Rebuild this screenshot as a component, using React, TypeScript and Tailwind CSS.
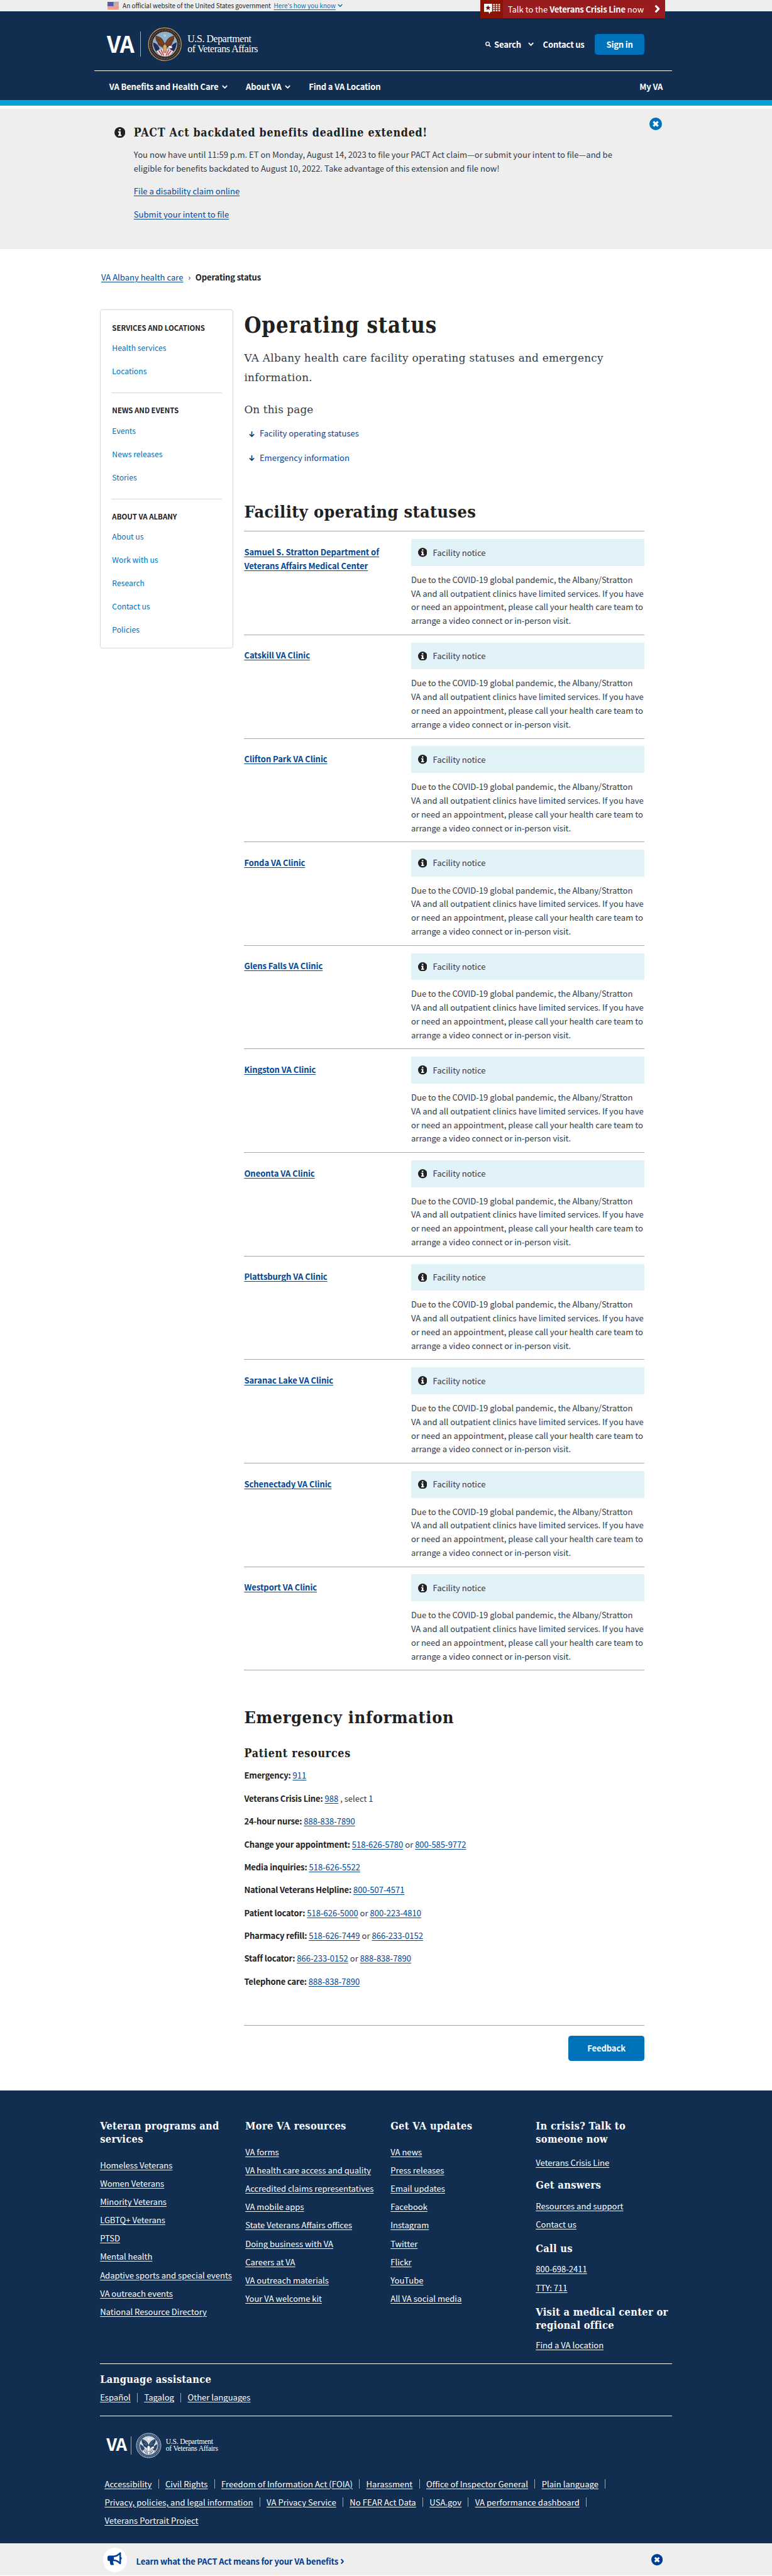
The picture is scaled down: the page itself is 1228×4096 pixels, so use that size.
import React from "react";
import { FaBullhorn } from "react-icons/fa";

const SANS = "font-['Noto_Sans_CJK_SC','Source_Sans_Pro',sans-serif]";
const SLAB = "font-['DejaVu_Serif_Condensed','DejaVu_Serif',serif]";
const SLAB_WIDE = "font-['DejaVu_Serif',serif]";

function Chevron({ className = "", w = 3.2 }: { className?: string; w?: number }) {
  return (
    <svg viewBox="0 0 16 10" className={className} fill="none" stroke="currentColor" strokeWidth={w}>
      <path d="M1.5 1.5 8 8l6.5-6.5" />
    </svg>
  );
}

function Info({ className }: { className: string }) {
  return (
    <svg viewBox="0 0 20 20" className={className}>
      <circle cx="10" cy="10" r="10" fill="#212121" />
      <path d="M8.3 3.4h3.2v2.7H8.3zM6.8 7.8h4.7v6.3h1.6v2.3H6.8v-2.3h1.6V10H6.8z" fill="#fff" />
    </svg>
  );
}

function Close({ className }: { className: string }) {
  return (
    <svg viewBox="0 0 22 22" className={className}>
      <circle cx="11" cy="11" r="11" fill="currentColor" />
      <path d="m7 7 8 8M15 7l-8 8" stroke="#fff" strokeWidth="3.6" />
    </svg>
  );
}

function Flag() {
  return (
    <svg viewBox="0 0 20 14" className="h-[14px] w-[20px]">
      <rect width="20" height="14" fill="#fff" />
      {[0, 2.3, 4.6, 6.9, 9.2, 11.6].map((y) => (
        <rect key={y} y={y} width="20" height="1.3" fill="#e0563d" />
      ))}
      <rect width="10.5" height="7.6" fill="#3d4fc0" />
      {[1.5, 3.8, 6].map((y) =>
        [1.5, 4, 6.5, 9].map((x) => <circle key={`${x}-${y}`} cx={x} cy={y} r=".45" fill="#dfe3ff" />),
      )}
    </svg>
  );
}

function Seal({ className, mono = false }: { className: string; mono?: boolean }) {
  const ring = mono ? "#2a4465" : "#1b1c2b";
  const edge = mono ? "#c9d3df" : "#c9a063";
  const sky = mono ? "#d3dbe5" : "#86b3d6";
  const wing = mono ? "#24405f" : "#6b3a22";
  const dark = mono ? "#2c4767" : "#232b58";
  return (
    <svg viewBox="0 0 60 60" className={className}>
      <circle cx="30" cy="30" r="28.600" fill={ring} stroke={edge} strokeWidth="1.400" />
      <circle cx="30" cy="30" r="25" fill="none" stroke={edge} strokeWidth="3.200" strokeDasharray="1.300 1.500" opacity=".6" />
      <circle cx="30" cy="30" r="21.400" fill={sky} stroke={edge} strokeWidth="1.200" />
      <path d="M9.500 27c4 1 8 4 10 8l3 9-5 2c-5-5-8-12-8-19zM50.500 27c-4 1-8 4-10 8l-3 9 5 2c5-5 8-12 8-19z" fill={dark} />
      <path d="M15 42l8-4h14l8 4c-4 6-9 9-15 9s-11-3-15-9z" fill={mono ? "#eef2f6" : "#ecdfe2"} />
      <path d="M19 41l6 8M23 39l5 11M41 41l-6 8M37 39l-5 11" stroke={mono ? "#3c5473" : "#b23246"} strokeWidth="1.500" />
      <path d="M14 15c6 1 11 4 14 10l2 4 2-4c3-6 8-9 14-10 1 5 0 9-3 12 0 4-3 6-6 7l-3 2-2 9h-4l-2-9-3-2c-3-1-6-3-6-7-3-3-4-7-3-12z" fill={wing} />
      <path d="M17 18c4 2 7 5 9 10M43 18c-4 2-7 5-9 10M19 25l7 5M41 25l-7 5" stroke={mono ? "#93a5ba" : "#94582f"} strokeWidth=".9" fill="none" />
      <path d="M27 33l3-3 3 3v6l-3 8-3-8z" fill={mono ? "#fff" : "#d8a56c"} />
      <path d="M37 33l6 1-1 3-5-1z" fill="#fff" />
      <circle cx="30" cy="15" r="2" fill={mono ? "#fff" : "#d9cf8a"} />
    </svg>
  );
}

function A({ children, className = "text-[#004795]" }: { children: React.ReactNode; className?: string }) {
  return (
    <a href="#" className={`underline decoration-1 underline-offset-[2px] ${className}`}>
      {children}
    </a>
  );
}

const clinics: React.ReactNode[] = [
  <>Samuel S. Stratton Department of<br />Veterans Affairs Medical Center</>,
  "Catskill VA Clinic",
  "Clifton Park VA Clinic",
  "Fonda VA Clinic",
  "Glens Falls VA Clinic",
  "Kingston VA Clinic",
  "Oneonta VA Clinic",
  "Plattsburgh VA Clinic",
  "Saranac Lake VA Clinic",
  "Schenectady VA Clinic",
  "Westport VA Clinic",
];

const sidebar = [
  { title: "SERVICES AND LOCATIONS", links: ["Health services", "Locations"] },
  { title: "NEWS AND EVENTS", links: ["Events", "News releases", "Stories"] },
  { title: "ABOUT VA ALBANY", links: ["About us", "Work with us", "Research", "Contact us", "Policies"] },
];

const phones: { label: string; numbers: string[]; after?: string }[] = [
  { label: "Emergency:", numbers: ["911"] },
  { label: "Veterans Crisis Line:", numbers: ["988"], after: " , select 1" },
  { label: "24-hour nurse:", numbers: ["888-838-7890"] },
  { label: "Change your appointment:", numbers: ["518-626-5780", "800-585-9772"] },
  { label: "Media inquiries:", numbers: ["518-626-5522"] },
  { label: "National Veterans Helpline:", numbers: ["800-507-4571"] },
  { label: "Patient locator:", numbers: ["518-626-5000", "800-223-4810"] },
  { label: "Pharmacy refill:", numbers: ["518-626-7449", "866-233-0152"] },
  { label: "Staff locator:", numbers: ["866-233-0152", "888-838-7890"] },
  { label: "Telephone care:", numbers: ["888-838-7890"] },
];

const footerColumns = [
  {
    title: <>Veteran programs and<br />services</>,
    links: ["Homeless Veterans", "Women Veterans", "Minority Veterans", "LGBTQ+ Veterans", "PTSD", "Mental health", "Adaptive sports and special events", "VA outreach events", "National Resource Directory"],
  },
  {
    title: <>More VA resources</>,
    links: ["VA forms", "VA health care access and quality", "Accredited claims representatives", "VA mobile apps", "State Veterans Affairs offices", "Doing business with VA", "Careers at VA", "VA outreach materials", "Your VA welcome kit"],
  },
  {
    title: <>Get VA updates</>,
    links: ["VA news", "Press releases", "Email updates", "Facebook", "Instagram", "Twitter", "Flickr", "YouTube", "All VA social media"],
  },
];

const legal = [
  ["Accessibility", "Civil Rights", "Freedom of Information Act (FOIA)", "Harassment", "Office of Inspector General", "Plain language"],
  ["Privacy, policies, and legal information", "VA Privacy Service", "No FEAR Act Data", "USA.gov", "VA performance dashboard"],
  ["Veterans Portrait Project"],
];

function FLink({ children }: { children: React.ReactNode }) {
  return (
    <a href="#" className="block w-fit text-white underline decoration-1 underline-offset-[2px]">
      {children}
    </a>
  );
}

function FHead({ children, className = "" }: { children: React.ReactNode; className?: string }) {
  return <h3 className={`${SLAB} text-[18px] leading-[23px] font-bold tracking-[0.33px] text-white ${className}`}>{children}</h3>;
}

function Bar() {
  return <i className="mx-[11.400px] h-[16px] w-px bg-white/60" />;
}

function Header() {
  return (
    <>
      <div className="flex h-[20px] items-center bg-[#eeeeee] pl-[188px] text-[10.930px] leading-[20px] whitespace-nowrap text-[#212121]">
        <Flag />
        <span className="ml-[6.500px]">An official website of the United States government</span>
        <A className="ml-[5px] text-[#0071bb]">Here's how you know</A>
        <Chevron className="ml-[3px] h-[6px] w-[9px] text-[#0b65a8]" w={2.6} />
      </div>
      <div className="absolute top-0 left-[840px] flex h-[32px] w-[323px] items-center bg-[#981b1e] text-[14.350px] leading-[32px] whitespace-nowrap text-white shadow-md">
        <div className="flex h-full w-[40px] items-center bg-[#8b1303] pl-[6px]">
          <svg viewBox="0 0 29 18" className="h-[18px] w-[29px]" fill="#fff">
            <path d="M0 0h14v14h-2.500L9 18l-1-4H0z" />
            <path d="m7 2.500 1.200 3h3.300L9 7.500l1 3.500-3-2-3 2 1-3.500-2.500-2h3.300z" fill="#5e0d05" />
            {[0.500, 4, 7.500, 11].map((y) => [15.800, 20.400, 25].map((x) => <rect key={`${x}-${y}`} x={x} y={y} width="3" height="2.200" />))}
          </svg>
        </div>
        <span className="ml-[8px] w-[240px]">Talk to the <b className="tracking-[-0.200px]">Veterans Crisis Line</b> now</span>
        <Chevron className="ml-[14px] h-[9px] w-[14px] -rotate-90" w={4} />
      </div>
      <header className="h-[155px] bg-[#112e51] font-bold whitespace-nowrap text-white">
        <div className="ml-[165px] flex h-[104px] w-[1010px] items-center border-b border-white">
          <div className="flex h-[60px] flex-1 items-center pt-[11px] pl-[22px]">
            <div className="mb-[5px] w-[58px] text-[39.500px] leading-[44px] tracking-[-1px]">VA</div>
            <div className="h-[44px] w-px bg-[#9fb0c4]" />
            <Seal className="ml-[12px] h-[60px] w-[60px]" />
            <div className="mb-px ml-[10px] font-['Liberation_Serif'] text-[17.500px] leading-[17px] font-normal tracking-[-0.450px]">
              U.S. Department<br />of Veterans Affairs
            </div>
          </div>
          <div className="flex items-center pt-[12px] pr-[48px] text-[14.350px] tracking-[-0.200px]">
            <svg viewBox="0 0 10 10" className="h-[10px] w-[10px]" fill="none" stroke="#fff" strokeWidth="1.500">
              <circle cx="4" cy="4" r="3.100" />
              <path d="m6.300 6.300 3 3" />
            </svg>
            <span className="ml-[5px]">Search</span>
            <Chevron className="ml-[12px] h-[7px] w-[10px]" />
            <span className="ml-[16px]">Contact us</span>
            <button className="ml-[18px] h-[36px] w-[87px] rounded-[5px] bg-[#0071bb] font-bold">Sign in</button>
          </div>
        </div>
        <nav className="flex h-[51px] items-center pt-[5px] pr-[191px] pl-[191px] text-[14.350px] tracking-[-0.170px]">
          <span>VA Benefits and Health Care</span>
          <Chevron className="ml-[6px] h-[7px] w-[10px]" />
          <span className="ml-[32px]">About VA</span>
          <Chevron className="ml-[6px] h-[7px] w-[10px]" />
          <span className="ml-[32px]">Find a VA Location</span>
          <span className="ml-auto">My VA</span>
        </nav>
      </header>
      <div className="h-[10px] bg-[#02a3dc]" />
      <div className="h-[5px] bg-[#fbfbfb]" />
    </>
  );
}

function Alert() {
  return (
    <section className="flex h-[245px] bg-[#eeeeee] pl-[200px]">
      <Info className="mt-[32px] h-[19px] w-[19px]" />
      <div className="ml-[15px] w-[902px] pt-[28.500px] leading-[24px] whitespace-nowrap">
        <h2 className={`${SLAB} text-[19.500px] leading-[26px] font-bold tracking-[0.790px] text-[#212121]`}>PACT Act backdated benefits deadline extended!</h2>
        <p className="mt-[14px]">
          You now have until 11:59 p.m. ET on Monday, August 14, 2023 to file your PACT Act claim—or submit your intent to file—and be
          <br />
          eligible for benefits backdated to August 10, 2022. Take advantage of this extension and file now!
        </p>
        <p className="mt-[16px]"><A>File a disability claim online</A></p>
        <p className="mt-[16px]"><A>Submit your intent to file</A></p>
      </div>
      <Close className="mt-[16px] h-[22px] w-[22px] text-[#0071bb]" />
    </section>
  );
}

function Sidebar() {
  return (
    <aside className="h-[592px] w-[233px] shrink-0 rounded-[4px] border border-[#d6d7d9] px-[19px] pt-[19.500px] leading-[24px]">
      {sidebar.map((s, i) => (
        <div key={s.title} className={i ? "mt-[24px] border-t border-[#d6d7d9] pt-[19px]" : ""}>
          <h3 className="pl-px text-[12.560px] font-bold text-[#212121]">{s.title}</h3>
          <ul className="mt-[11.800px] space-y-[16.700px] pl-px text-[13.400px] text-[#0071bb]">
            {s.links.map((l) => <li key={l}>{l}</li>)}
          </ul>
        </div>
      ))}
    </aside>
  );
}

function Main() {
  return (
    <main className="ml-[19px] w-[700px] leading-[24px] whitespace-nowrap">
      <h1 className={`${SLAB} mt-[4px] text-[38px] leading-[48px] font-bold tracking-[0.950px] text-[#212121]`}>Operating status</h1>
      <p className={`${SLAB_WIDE} mt-[16px] text-[18.500px] leading-[34px] tracking-[0.330px]`}>
        VA Albany health care facility operating statuses and emergency<br />information.
      </p>
      <h2 className={`${SLAB_WIDE} mt-[22px] text-[18.500px] leading-[34px] tracking-[0.150px]`}>On this page</h2>
      <ul className="mt-[13px] space-y-[18px] pl-[8px] text-[#004795]">
        {["Facility operating statuses", "Emergency information"].map((t) => (
          <li key={t} className="flex h-[24px] items-center">
            <svg viewBox="0 0 10 10" className="mt-[2px] mr-[9px] h-[10px] w-[10px]" fill="none" stroke="#003e73" strokeWidth="1.800">
              <path d="M5 0v9M1 4.800l4 4 4-4" />
            </svg>
            {t}
          </li>
        ))}
      </ul>
      <h2 className={`${SLAB} mt-[63px] text-[29.500px] leading-[40px] font-bold tracking-[0.420px] text-[#212121]`}>Facility operating statuses</h2>
      <div className="mt-[13.300px] border-b border-[#a5a8ac]">
        {clinics.map((name, i) => (
          <div key={i} className="flex h-[181px] border-t border-[#a5a8ac]">
            <div className="w-[292px] pt-[23.700px] font-bold tracking-[-0.070px]"><A>{name}</A></div>
            <div className="w-[408px] pt-[13px]">
              <div className="flex h-[47px] items-center bg-[#e1f3f8] pl-[12px]">
                <Info className="h-[16px] w-[16px]" />
                <span className="ml-[10px]">Facility notice</span>
              </div>
              <p className="mt-[12px]">
                Due to the COVID-19 global pandemic, the Albany/Stratton<br />
                VA and all outpatient clinics have limited services. If you have<br />
                or need an appointment, please call your health care team to<br />
                arrange a video connect or in-person visit.
              </p>
            </div>
          </div>
        ))}
      </div>
      <h2 className={`${SLAB} mt-[62.500px] text-[29.500px] leading-[40px] font-bold tracking-[0.720px] text-[#212121]`}>Emergency information</h2>
      <h3 className={`${SLAB} mt-[28.700px] text-[19.500px] leading-[26px] font-bold tracking-[0.820px] text-[#212121]`}>Patient resources</h3>
      <div className="mt-[14.500px] space-y-[16px]">
        {phones.map((p) => (
          <p key={p.label}>
            <b className="tracking-[-0.180px] text-[#212121]">{p.label}</b>{" "}
            {p.numbers.map((n, i) => (
              <React.Fragment key={n}>{i > 0 && " or "}<A>{n}</A></React.Fragment>
            ))}
            {p.after}
          </p>
        ))}
      </div>
      <div className="mt-[64px] border-t-2 border-[#a5a8ac]" />
      <div className="mt-[18px] flex justify-end">
        <button className="h-[44px] w-[133px] rounded-[5px] bg-[#0071bb] font-bold tracking-[-0.150px] text-white">Feedback</button>
      </div>
    </main>
  );
}

function Footer() {
  return (
    <footer className="h-[792px] bg-[#112e51] px-[175px] leading-[24px] whitespace-nowrap text-white">
      <div className="grid h-[477px] grid-cols-[254px_254px_254px_238px] pt-[52px]">
        {footerColumns.map((c, i) => (
          <div key={i}>
            <FHead>{c.title}</FHead>
            <div className="mt-[21px] space-y-[8px]">{c.links.map((l) => <FLink key={l}>{l}</FLink>)}</div>
          </div>
        ))}
        <div>
          <FHead>In crisis? Talk to<br />someone now</FHead>
          <div className="mt-[17px]"><FLink>Veterans Crisis Line</FLink></div>
          <FHead className="mt-[16px]">Get answers</FHead>
          <div className="mt-[12px] space-y-[8px]"><FLink>Resources and support</FLink><FLink>Contact us</FLink></div>
          <FHead className="mt-[20px]">Call us</FHead>
          <div className="mt-[12px] space-y-[8px]"><FLink>800-698-2411</FLink><FLink>TTY: 711</FLink></div>
          <FHead className="mt-[20px]">Visit a medical center or<br />regional office</FHead>
          <div className="mt-[11px]"><FLink>Find a VA location</FLink></div>
        </div>
      </div>
      <div className="h-[93px] border-y border-white pt-[16.500px]">
        <FHead>Language assistance</FHead>
        <div className="mt-[7.500px] flex items-center">
          <FLink>Español</FLink><Bar />
          <FLink>Tagalog</FLink><Bar />
          <FLink>Other languages</FLink>
        </div>
      </div>
      <div className="flex h-[106px] items-start pt-[28px] pl-[11px]">
        <div className="flex h-[45px] items-center">
          <div className="mb-[4px] w-[43px] text-[30px] font-bold tracking-[-1px]">VA</div>
          <div className="h-[32px] w-px bg-[#9fb0c4]" />
          <Seal mono className="ml-[8px] h-[45px] w-[45px]" />
          <div className="ml-[7px] font-['Liberation_Serif'] text-[12.800px] leading-[12.700px] tracking-[-0.250px]">U.S. Department<br />of Veterans Affairs</div>
        </div>
      </div>
      <div className="space-y-[8px] pl-[8px] tracking-[0.050px]">
        {legal.map((row, r) => (
          <div key={r} className="flex items-center">
            {row.map((l) => (
              <React.Fragment key={l}>
                <FLink>{l}</FLink>
                {r < 2 && <Bar />}
              </React.Fragment>
            ))}
          </div>
        ))}
      </div>
    </footer>
  );
}

export default function App() {
  return (
    <div className={`${SANS} relative h-[4502px] w-[1350px] overflow-hidden bg-white text-[14.350px] text-[#323a45] [zoom:0.90963]`}>
      <Header />
      <Alert />
      <nav className="flex h-[106px] items-start pt-[37.700px] pl-[177px] leading-[24px]">
        <A>VA Albany health care</A>
        <span className="mx-[8.500px]">›</span>
        <b className="tracking-[-0.150px] text-[#212121]">Operating status</b>
      </nav>
      <div className="flex h-[3113px] pl-[175px]">
        <Sidebar />
        <Main />
      </div>
      <Footer />
      <div className="flex h-[58px] items-center bg-[#eeeeee] pl-[180px] font-bold text-[#003e91]">
        <div className="flex h-[42px] w-[42px] items-center justify-center rounded-full bg-white">
          <FaBullhorn className="mb-[5px] h-[23px] w-[25px]" />
        </div>
        <a href="#" className="ml-[16px] pt-[4px] tracking-[-0.180px] whitespace-nowrap">Learn what the PACT Act means for your VA benefits</a>
        <Chevron className="mt-[4px] ml-[2px] h-[6px] w-[10px] -rotate-90" w={3.600} />
        <Close className="mr-[191px] ml-auto h-[20px] w-[20px] text-[#003e91]" />
      </div>
    </div>
  );
}
